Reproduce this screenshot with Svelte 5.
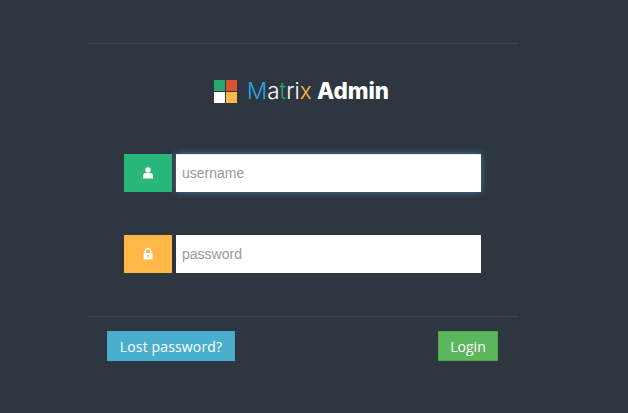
<script>
  let username = $state('');
  let password = $state('');
</script>

<div class="page">
  <form class="login-box" onsubmit={(e) => e.preventDefault()}>
    <div class="logo">
      <div class="mark">
        <span class="q green"></span>
        <span class="q red"></span>
        <span class="q white"></span>
        <span class="q orange"></span>
      </div>
      <h1 class="title"><span class="thin"><span class="c-blue">M</span><span>a</span><span class="c-green">t</span><span>ri</span><span class="c-orange">x</span></span> <strong>Admin</strong></h1>
    </div>

    <div class="fields">
      <div class="row">
        <span class="addon bg-green">
          <svg width="12" height="12" viewBox="0 0 12 12" aria-hidden="true">
            <circle cx="6" cy="3" r="2.7" fill="#fff" />
            <path d="M1 11.4V8.4C1 6.9 2.2 6 3.6 6h4.8C9.8 6 11 6.9 11 8.4v3z" fill="#fff" />
          </svg>
        </span>
        <input class="focused" type="text" placeholder="username" bind:value={username} />
      </div>
      <div class="row">
        <span class="addon bg-orange">
          <svg width="10" height="12" viewBox="0 0 10 12" aria-hidden="true">
            <path d="M2.2 5.5V3.4a2.8 2.8 0 0 1 5.6 0v2.1" fill="none" stroke="#fff" stroke-width="1.4" />
            <path d="M.6 5h8.8v6.4H.6z" fill="#fff" />
            <path d="M4.4 7h1.2v2.4H4.4z" fill="#ffb848" />
          </svg>
        </span>
        <input type="password" placeholder="password" bind:value={password} />
      </div>
    </div>

    <div class="actions">
      <button type="button" class="btn btn-info">Lost password?</button>
      <button type="submit" class="btn btn-success">Login</button>
    </div>
  </form>
</div>

<style>
  :global(body) {
    background: #2e363f;
  }

  .page {
    width: 628px;
    height: 413px;
    padding-top: 43px;
    box-sizing: border-box;
    background: #2e363f;
    overflow: hidden;
  }

  .login-box {
    width: 431px;
    margin-left: 87px;
    border-top: 1px solid #3f4954;
  }

  .logo {
    display: flex;
    align-items: center;
    gap: 10px;
    height: 24px;
    margin-top: 35px;
    padding-left: 127px;
  }

  .mark {
    display: grid;
    grid-template-columns: 11px 11px;
    grid-template-rows: 11px 11px;
    gap: 1px;
  }

  .q.green { background: #27a971; }
  .q.red { background: #da542e; }
  .q.white { background: #fff; }
  .q.orange { background: #ffb848; }

  .title {
    margin: 0;
    font-family: "Inter", "Liberation Sans", sans-serif;
    font-size: 22.4px;
    font-weight: 400;
    line-height: 24px;
    word-spacing: -1px;
    color: #fff;
    white-space: nowrap;
  }

  .thin { font-weight: 300; }
  .title strong { font-weight: 800; }

  .c-blue { color: #2ba6e0; }
  .c-green { color: #27a971; }
  .c-orange { color: #ffb848; }

  .fields {
    display: flex;
    flex-direction: column;
    gap: 43px;
    margin-top: 51px;
    padding-left: 37px;
  }

  .row {
    display: flex;
    gap: 4px;
    height: 38px;
  }

  .addon {
    display: flex;
    align-items: center;
    justify-content: center;
    width: 48px;
  }

  .bg-green { background: #28b779; }
  .bg-orange { background: #ffb848; }

  input {
    width: 305px;
    height: 38px;
    box-sizing: border-box;
    padding: 0 6px 1px;
    border: 0;
    border-radius: 0;
    outline: none;
    background: #fff;
    font-family: "Liberation Sans", Arial, sans-serif;
    font-size: 14px;
    color: #555;
  }

  input::placeholder {
    color: #999;
    opacity: 1;
  }

  input.focused {
    box-shadow: inset 0 1px 0 #e4edf6, 0 0 7px rgba(82, 168, 236, 0.6);
  }

  .actions {
    display: flex;
    justify-content: space-between;
    margin-top: 43px;
    padding: 14px 20px 0;
    border-top: 1px solid #3f4954;
  }

  .btn {
    height: 30px;
    padding: 0;
    border: 1px solid;
    border-radius: 0;
    font-family: "Open Sans", "Noto Sans", sans-serif;
    font-size: 14px;
    color: #fff;
  }

  .btn-info {
    width: 128px;
    letter-spacing: 0.15px;
    background: #49afcd;
    border-color: #46a8c5;
  }

  .btn-success {
    width: 60px;
    background: #5bb75b;
    border-color: #4fa64f;
  }
</style>
